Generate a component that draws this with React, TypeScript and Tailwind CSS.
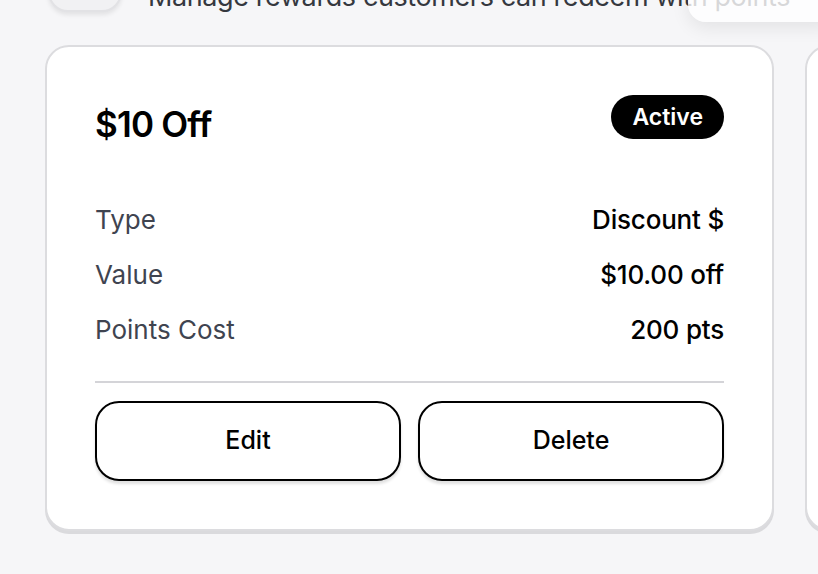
import React from "react";

const font = { fontFamily: "Inter, 'Noto Sans', sans-serif" };

function Row({ label, value }: { label: string; value: string }) {
  return (
    <div className="flex items-center justify-between h-[55px]">
      <span className="text-[26px] text-[#3f4450]">{label}</span>
      <span className="text-[26px] font-medium text-black tracking-[-0.2px]">{value}</span>
    </div>
  );
}

function Card() {
  return (
    <div className="w-[729px] shrink-0 rounded-[24px] border-2 border-[#dcdcdf] bg-white shadow-[0_3px_0_#dadadd] px-[48px] pt-[48px] pb-[48px]">
      <div className="flex items-start justify-between">
        <h2 className="text-[35px] font-semibold text-black leading-none mt-[12px] tracking-[-0.8px]">$10 Off</h2>
        <span className="h-[44px] px-[21px] rounded-full bg-black text-white text-[23px] font-semibold flex items-center">Active</span>
      </div>
      <div className="mt-[50px]">
        <Row label="Type" value="Discount $" />
        <Row label="Value" value="$10.00 off" />
        <Row label="Points Cost" value="200 pts" />
      </div>
      <div className="h-[2px] bg-[#d4d4d8] mt-[24px]" />
      <div className="flex gap-[17px] mt-[18px]">
        <button className="flex-1 h-[80px] rounded-[24px] border-2 border-black bg-white text-[25px] font-medium text-black shadow-[0_3px_3px_rgba(0,0,0,0.12)]">Edit</button>
        <button className="flex-1 h-[80px] rounded-[24px] border-2 border-black bg-white text-[25px] font-medium text-black shadow-[0_3px_3px_rgba(0,0,0,0.12)]">Delete</button>
      </div>
    </div>
  );
}

export default function App() {
  return (
    <div className="relative w-[818px] h-[574px] overflow-hidden bg-[#f6f6f8]" style={font}>
      <div className="flex items-end gap-[26px] pl-[48px] mt-[-40px] h-[54px]">
        <div className="w-[74px] h-[52px] rounded-[20px] bg-[#f1f1f3] border-2 border-[#e2e2e5] shadow-[0_3px_4px_rgba(0,0,0,0.08)] mb-[2px]" />
        <p className="text-[27px] text-[#35383f] leading-none whitespace-nowrap mb-[4px] tracking-[-0.4px]">Manage rewards customers can redeem with points</p>
      </div>
      <div className="absolute right-[-20px] top-[-30px] w-[150px] h-[52px] rounded-[18px] bg-white/80 shadow-[0_6px_18px_rgba(0,0,0,0.08)]" />
      <div className="flex gap-[31px] pl-[45px] mt-[31px]">
        <Card />
        <Card />
      </div>
    </div>
  );
}
